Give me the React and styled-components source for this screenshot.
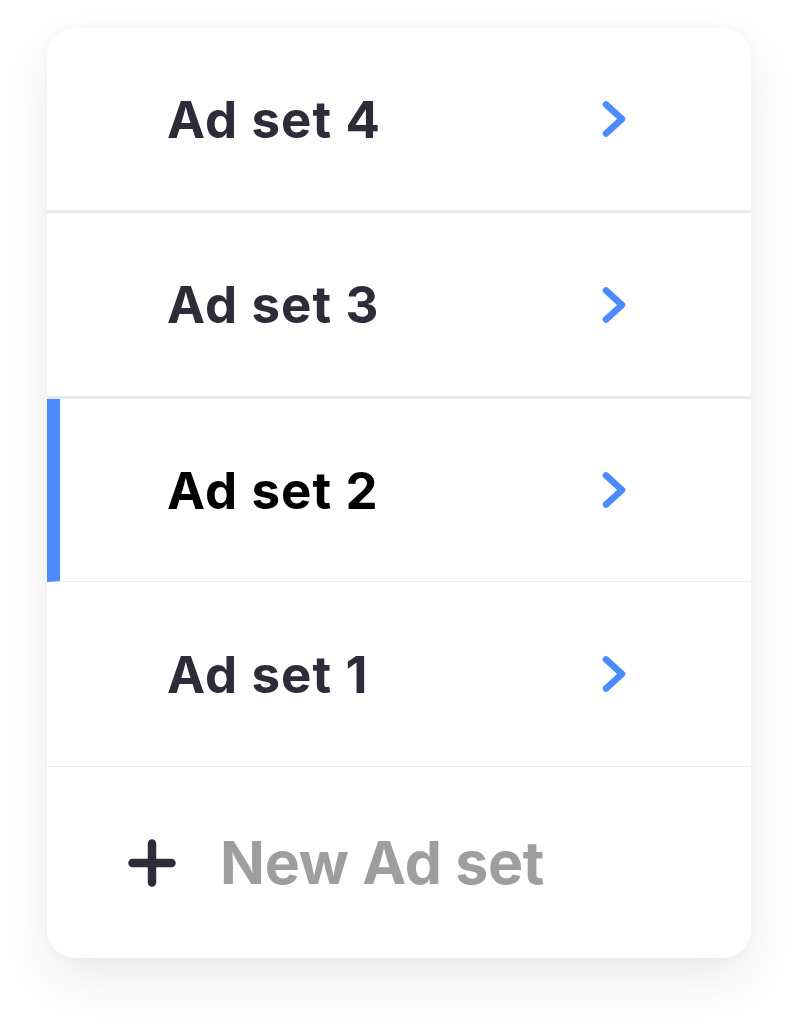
import React from 'react';
import styled, { createGlobalStyle } from 'styled-components';

const sets = [
  { name: 'Ad set 4', height: 182, line: 3 },
  { name: 'Ad set 3', height: 183, line: 3 },
  { name: 'Ad set 2', height: 182, line: 1, active: true },
  { name: 'Ad set 1', height: 184, line: 1 },
];

const Chevron = () => (
  <svg width="30" height="40" viewBox="0 0 30 40" fill="none">
    <path d="M6 5.5 L22 20 L6 34.5" stroke="#4a8bff" strokeWidth="6.5" strokeLinecap="round" strokeLinejoin="round" />
  </svg>
);

const Plus = () => (
  <svg width="48" height="48" viewBox="0 0 48 48" fill="none">
    <path d="M24 4.5 V43.5 M4.5 24 H43.5" stroke="#2d2c3a" strokeWidth="8.5" strokeLinecap="round" />
  </svg>
);

const App = () => {
  return (
    <>
      <GlobalStyle />
      <Page>
        <Card>
          {sets.map((set, index) => (
            <Row key={index} active={set.active} line={set.line} h={set.height}>
              <Label active={set.active}>{set.name}</Label>
              <Chevron />
            </Row>
          ))}
          <NewRow>
            <Plus />
            <NewLabel>New Ad set</NewLabel>
          </NewRow>
        </Card>
      </Page>
    </>
  );
};

export default App;

const GlobalStyle = createGlobalStyle`
  body {
    margin: 0;
    background: #ffffff;
    font-family: "Inter", "Liberation Sans", sans-serif;
  }
`

const Page = styled.div`
  width: 797px;
  height: 1024px;
  padding: 28px 46px 0 47px;
  box-sizing: border-box;
`

const Card = styled.div`
  width: 704px;
  height: 930px;
  background: #fff;
  border-radius: 28px;
  box-shadow: 0 22px 50px rgba(0, 0, 0, 0.08), 0 0 12px rgba(0, 0, 0, 0.03);
  display: flex;
  flex-direction: column;
  overflow: hidden;
`

const Row = styled.div`
  height: ${props => props.h}px;
  flex-shrink: 0;
  display: flex;
  align-items: center;
  justify-content: space-between;
  padding: 0 121px 0 ${props => props.active ? 107 : 120}px;
  border-left: ${props => props.active ? '13px solid #4a8bff' : 'none'};
  border-bottom: ${props => props.line}px solid ${props => props.line > 1 ? '#e6eaf3' : '#eceef3'};
`

const Label = styled.span`
  font-size: 51px;
  font-weight: 700;
  letter-spacing: 1.1px;
  color: ${props => props.active ? '#000' : '#2d2c3a'};
`

const NewRow = styled.div`
  flex: 1;
  display: flex;
  align-items: center;
  gap: 44px;
  padding-left: 81px;
`

const NewLabel = styled.span`
  font-size: 59px;
  font-weight: 700;
  letter-spacing: -0.3px;
  color: #9e9e9e;
`
